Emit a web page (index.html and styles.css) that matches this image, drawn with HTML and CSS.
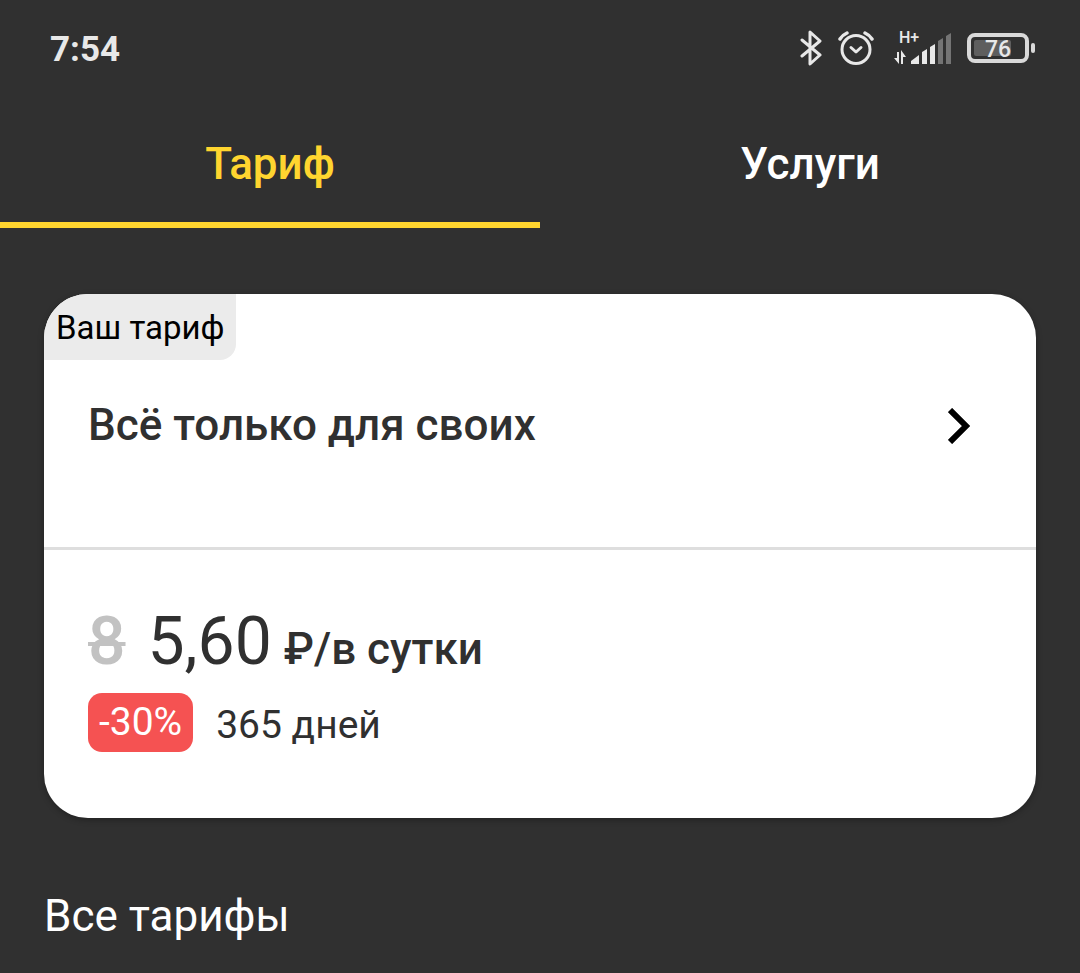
FILE: index.html
```html
<!DOCTYPE html>
<html lang="ru">

<head>
    <meta charset="UTF-8">
    <meta name="viewport" content="width=device-width, initial-scale=1.0">
    <title>Тариф</title>
    <link rel="stylesheet" href="styles.css">
</head>

<body>
    <header class="statusbar">
        <time class="clock">7:54</time>
        <div class="status-icons">
            <svg class="bluetooth" width="24" height="36" viewBox="0 0 24 36" fill="none" stroke="#e8e8e8" stroke-width="3" stroke-linejoin="round" stroke-linecap="round">
                <path d="M2 10L20 25L10 34V2L20 11L2 26"/>
            </svg>
            <svg class="alarm" width="36" height="36" viewBox="0 0 36 36" fill="none" stroke="#e8e8e8" stroke-linecap="round" stroke-linejoin="round">
                <circle cx="18" cy="19.500" r="14" stroke-width="3"/>
                <path d="M13 17.500L18 22L23 17.500" stroke-width="3"/>
                <path d="M2 9Q4.500 5 9 3M34 9Q31.500 5 27 3" stroke-width="3.400"/>
            </svg>
            <svg class="signal" width="58" height="40" viewBox="0 -2 58 40" fill="#e8e8e8">
                <text x="5" y="13" class="network">H+</text>
                <path d="M3 22H5V34L0 28H3ZM7 34V20L12 27H9V34Z"/>
                <path d="M17 34V31L25 25V34ZM28 34V22L33 19V34ZM36 34V17L41 14V34Z"/>
                <path d="M44 34V11L49 8V34ZM52 34V6L57 3V34Z" fill="#747474"/>
            </svg>
            <svg class="battery" width="69" height="30" viewBox="0 0 69 30">
                <rect x="2" y="2" width="58" height="26" rx="6" fill="none" stroke="#d9d9d9" stroke-width="4"/>
                <rect x="7" y="7" width="37" height="16" rx="2" fill="#5e5e5e"/>
                <rect x="64" y="10" width="4" height="10" rx="2" fill="#d9d9d9"/>
                <text x="31" y="24" text-anchor="middle" class="charge">76</text>
            </svg>
        </div>
    </header>

    <nav class="tabs">
        <a href="#tariff" class="tab active">Тариф</a>
        <a href="#services" class="tab">Услуги</a>
    </nav>

    <main id="tariff">
        <section class="card">
            <div class="label">Ваш тариф</div>
            <a href="#details" class="tariff-link">
                <h1>Всё только для своих</h1>
                <svg width="24" height="36" viewBox="0 0 24 36" fill="none" stroke="#000" stroke-width="6">
                    <path d="M2 2L18 18L2 34"/>
                </svg>
            </a>
            <div class="price-block">
                <div class="price">
                    <s>8</s>
                    <span class="amount">5,60</span>
                    <span class="unit">₽/в сутки</span>
                </div>
                <div class="period">
                    <span class="discount">-30%</span>
                    <span class="days">365 дней</span>
                </div>
            </div>
        </section>
        <h2>Все тарифы</h2>
    </main>
</body>

</html>
```

FILE: styles.css
```css
body {
    font-family: Roboto, sans-serif;
    background-color: #303030;
    color: #fff;
    margin: 0;
}

h1, h2 {
    margin: 0;
}

a {
    color: inherit;
    text-decoration: none;
}

.statusbar {
    display: flex;
    align-items: center;
    justify-content: space-between;
    height: 96px;
    padding: 0 44px 0 50px;
}

.clock {
    padding-top: 3px;
    font-size: 35px;
    font-weight: 700;
    color: #e8e8e8;
}

.status-icons {
    display: flex;
    align-items: center;
}

.alarm {
    margin-left: 14px;
}

.signal {
    margin-left: 20px;
}

.battery {
    margin-left: 15px;
}

.network {
    font-size: 16px;
    font-weight: 500;
}

.charge {
    font-size: 23px;
    font-weight: 500;
    fill: #e8e8e8;
}

.tabs {
    display: flex;
}

.tab {
    flex: 1;
    height: 126px;
    line-height: 136px;
    border-bottom: 6px solid transparent;
    text-align: center;
    font-size: 44px;
    font-weight: 500;
}

.tab.active {
    color: #ffd52f;
    border-bottom-color: #ffd52f;
}

main {
    padding: 66px 44px 0;
}

.card {
    background-color: #fff;
    color: #303030;
    border-radius: 44px;
    overflow: hidden;
    box-shadow: 0 2px 6px rgba(0, 0, 0, 0.3);
}

.label {
    width: fit-content;
    padding: 2px 12px 0;
    background-color: #ebebeb;
    color: #000;
    border-bottom-right-radius: 16px;
    font-size: 33px;
    line-height: 64px;
}

.tariff-link {
    display: flex;
    align-items: center;
    justify-content: space-between;
    padding: 32px 64px 88px 44px;
    border-bottom: 3px solid #dedede;
}

h1 {
    font-size: 44px;
    font-weight: 500;
    line-height: 67px;
}

.price-block {
    padding: 54px 44px 66px;
}

.price {
    display: flex;
    align-items: baseline;
    line-height: 76px;
}

.price s {
    font-size: 66px;
    font-weight: 500;
    color: #c2c2c2;
    text-decoration-thickness: 4px;
}

.amount {
    margin-left: 22px;
    font-size: 66px;
}

.unit {
    margin-left: 12px;
    font-size: 44px;
    font-weight: 500;
}

.period {
    display: flex;
    align-items: flex-end;
    gap: 23px;
    margin-top: 6px;
    font-size: 39px;
    line-height: 59px;
}

.discount {
    padding: 0 11px;
    background-color: #f55252;
    color: #fff;
    border-radius: 14px;
}

.days {
    line-height: 54px;
}

h2 {
    margin: 65px 0 24px;
    font-size: 44px;
    font-weight: 400;
    line-height: 66px;
}
```
